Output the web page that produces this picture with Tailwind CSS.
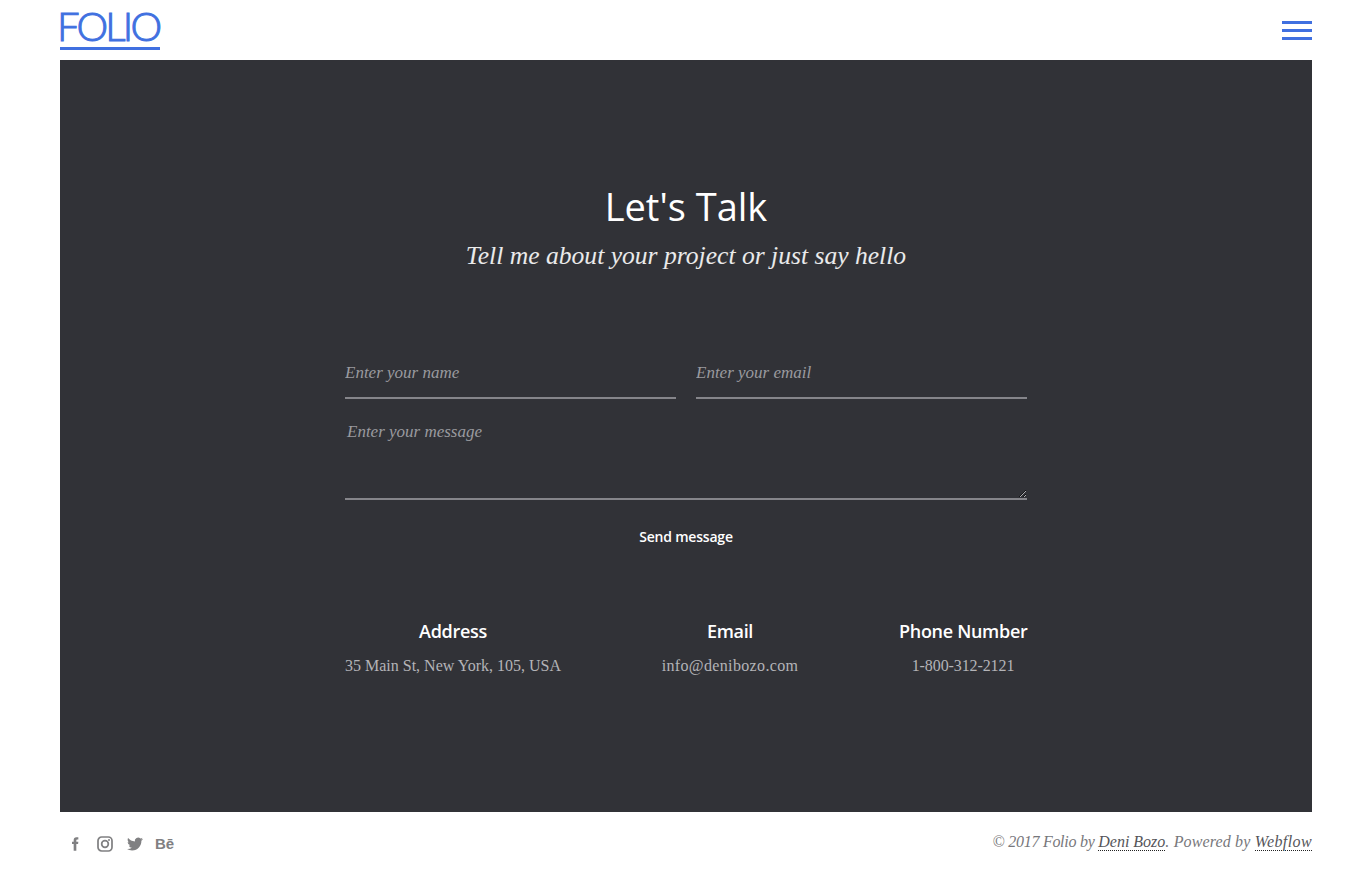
<!DOCTYPE html>
<html lang="en">
<head>
  <meta charset="UTF-8" />
  <title>Folio - Contact</title>
  <script src="https://cdn.jsdelivr.net/npm/@tailwindcss/browser@4"></script>
</head>
<body class="bg-white font-['Liberation_Serif',serif]">
  <div class="px-[60px]">
    <!-- header -->
    <header class="h-[60px] flex items-center justify-between">
      <a href="#" class="block w-[100px] h-[50px] mb-[10px] indent-[-3px] border-b-[3px] border-[#4070e0] text-[#4070e0] font-['Lato',sans-serif] font-light [-webkit-text-stroke:1px_#4070e0] text-[40px] leading-[52px] tracking-[-2.8px] whitespace-nowrap">FOLIO</a>
      <button class="w-[30px] flex flex-col gap-[5px]">
        <span class="block h-[3px] bg-[#4070e0]"></span>
        <span class="block h-[3px] bg-[#4070e0]"></span>
        <span class="block h-[3px] bg-[#4070e0]"></span>
      </button>
    </header>

    <!-- contact panel -->
    <main class="h-[752px] bg-[#313237] pt-[121px] flex flex-col items-center">
      <h1 class="font-['Open_Sans',sans-serif] text-[38px] leading-[50px] text-white">Let's Talk</h1>
      <p class="mt-[7px] italic text-[25.6px] leading-[36px] text-white/90">Tell me about your project or just say hello</p>

      <form class="w-[682px] mt-[75px]">
        <div class="flex gap-5">
          <input type="text" placeholder="Enter your name" class="w-full h-[50px] border-b-2 border-[#85858a] bg-transparent italic text-[17px] text-white outline-none placeholder:text-[#9a9a9f]">
          <input type="email" placeholder="Enter your email" class="w-full h-[50px] border-b-2 border-[#85858a] bg-transparent italic text-[17px] text-white outline-none placeholder:text-[#9a9a9f]">
        </div>
        <textarea placeholder="Enter your message" class="block w-full h-[82px] mt-[19px] px-[2px] pt-[1px] border-b-2 border-[#85858a] bg-transparent italic text-[17px] text-white outline-none placeholder:text-[#9a9a9f]"></textarea>
        <button type="button" class="block mx-auto mt-[26px] font-['Open_Sans',sans-serif] font-semibold text-[14px] leading-[22px] tracking-[-0.2px] text-white">Send message</button>
      </form>

      <div class="w-[682px] mt-[70px] flex justify-between text-center whitespace-nowrap">
        <div class="w-[216px]">
          <h4 class="font-['Open_Sans',sans-serif] font-semibold text-[18px] leading-[26px] tracking-[-0.3px] text-white">Address</h4>
          <p class="mt-[10px] text-[16px] leading-[24px] text-[#b4b4b8]">35 Main St, New York, 105, USA</p>
        </div>
        <div class="w-[137px]">
          <h4 class="font-['Open_Sans',sans-serif] font-semibold text-[18px] leading-[26px] tracking-[-0.3px] text-white">Email</h4>
          <p class="mt-[10px] text-[16px] leading-[24px] tracking-[0.35px] text-[#b4b4b8]">info@denibozo.com</p>
        </div>
        <div class="w-[128px]">
          <h4 class="font-['Open_Sans',sans-serif] font-semibold text-[18px] leading-[26px] tracking-[-0.3px] text-white">Phone Number</h4>
          <p class="mt-[10px] text-[16px] leading-[24px] tracking-[-0.1px] text-[#b4b4b8]">1-800-312-2121</p>
        </div>
      </div>
    </main>

    <!-- footer -->
    <footer class="h-[60px] flex items-center justify-between">
      <div class="flex items-center pl-[7px] pt-[4px] text-[#808082]">
        <svg viewBox="0 0 24 24" class="w-4 h-4 fill-current"><path d="M14 8.5V6.5c0-.8.4-1.2 1.3-1.2H17V2h-2.8C11.3 2 10 3.8 10 6.2v2.3H7.5V12H10v10h4V12h2.6l.4-3.5z"/></svg>
        <svg viewBox="0 0 24 24" class="w-4 h-4 ml-[14px] fill-none stroke-current stroke-[2.6]"><rect x="1.5" y="1.5" width="21" height="21" rx="5.5"/><circle cx="12" cy="12" r="5"/><circle cx="18" cy="6" r="1.5" class="fill-current stroke-0"/></svg>
        <svg viewBox="0 0 24 24" class="w-4 h-4 ml-[14px] fill-current"><path d="M23.953 4.57a10 10 0 01-2.825.775 4.958 4.958 0 002.163-2.723c-.951.555-2.005.959-3.127 1.184a4.92 4.92 0 00-8.384 4.482C7.69 8.095 4.067 6.13 1.64 3.162a4.822 4.822 0 00-.666 2.475c0 1.71.87 3.213 2.188 4.096a4.904 4.904 0 01-2.228-.616v.06a4.923 4.923 0 003.946 4.827 4.996 4.996 0 01-2.212.085 4.936 4.936 0 004.604 3.417 9.867 9.867 0 01-6.102 2.105c-.39 0-.779-.023-1.17-.067a13.995 13.995 0 007.557 2.209c9.053 0 13.998-7.496 13.998-13.985 0-.21 0-.42-.015-.63A9.935 9.935 0 0024 4.59z"/></svg>
        <span class="ml-[12px] font-['Liberation_Sans',sans-serif] font-bold text-[15px] leading-4">Bē</span>
      </div>
      <p class="italic text-[16px] leading-6 text-[#77777b] whitespace-nowrap"><span class="tracking-[-0.27px]">© 2017 Folio by </span><a href="#" class="text-[#55555a] border-b border-dotted border-[#222]">Deni Bozo</a><span class="tracking-[0.15px]">. Powered by </span><a href="#" class="text-[#55555a] tracking-[0.4px] border-b border-dotted border-[#222]">Webflow</a></p>
    </footer>
  </div>
</body>
</html>
